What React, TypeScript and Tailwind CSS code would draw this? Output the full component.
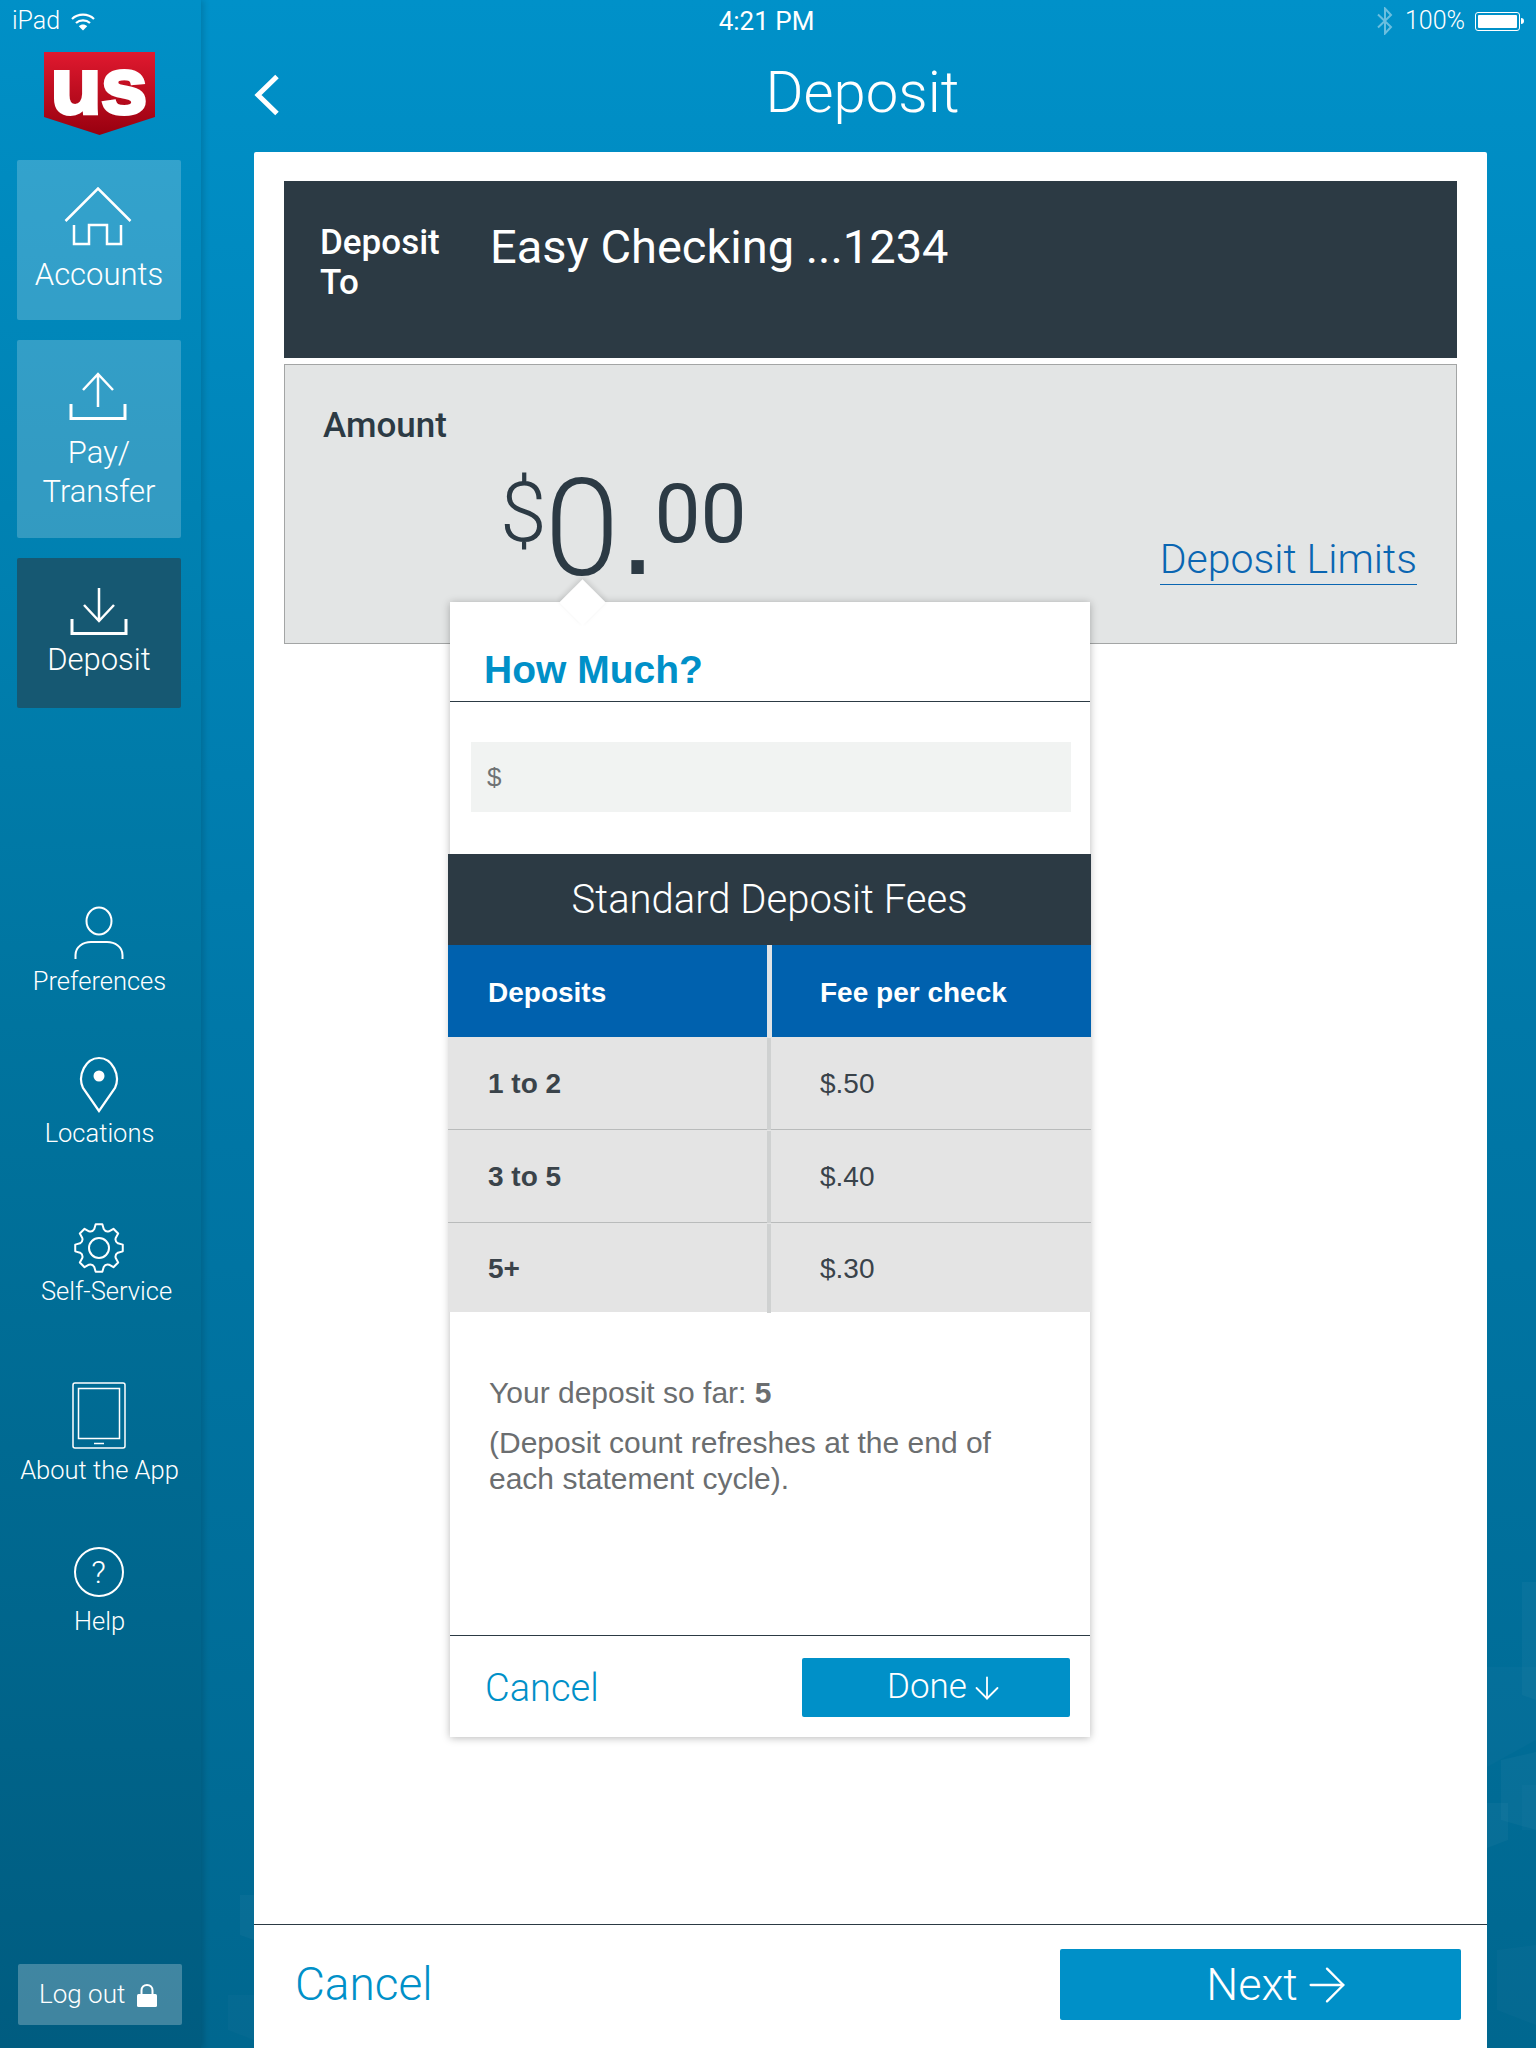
import { ArrowDown, ArrowRight } from 'lucide-react'
import type { ReactNode } from 'react'

// builds the outline of the sidebar gear, teeth are rounded by the line join
function gearPath(cx: number, cy: number) {
  const at = (deg: number, r: number) => {
    const a = ((deg - 90) * Math.PI) / 180
    return `${(cx + r * Math.cos(a)).toFixed(2)} ${(cy + r * Math.sin(a)).toFixed(2)}`
  }
  let d = ''
  for (let i = 0; i < 8; i++) {
    const a = i * 45
    d += `${i === 0 ? 'M' : 'L'}${at(a - 14, 19.5)} L${at(a - 8, 24)} L${at(a + 8, 24)} L${at(a + 14, 19.5)} Q${at(a + 22.5, 17)} ${at(a + 31, 19.5)} `
  }
  return d + 'Z'
}

const Logo = () => (
  <svg width="112" height="84" viewBox="0 0 112 84" className="block overflow-visible">
    <defs>
      <linearGradient id="shield" x1="0" y1="0" x2="0" y2="1">
        <stop offset="0" stopColor="#e0192f" />
        <stop offset="1" stopColor="#98000f" />
      </linearGradient>
    </defs>
    <path d="M0 0H111V65L55.5 83L0 65Z" fill="url(#shield)" />
    <text
      x="55"
      y="61"
      textAnchor="middle"
      fill="#fff"
      stroke="#fff"
      strokeWidth="4"
      fontFamily="'Liberation Sans', sans-serif"
      fontWeight="700"
      fontSize="78"
      textLength="96"
      lengthAdjust="spacingAndGlyphs"
    >
      us
    </text>
  </svg>
)

// faint polygons of the wallpaper, visible in the strips beside the card
const Wallpaper = () => (
  <svg width="1536" height="2048" viewBox="0 0 1536 2048" fill="#fff" className="absolute inset-0">
    <path d="M1522 1582H1536V1700L1522 1695Z" fillOpacity="0.03" />
    <path d="M1487 1667H1536V1740L1487 1767Z" fillOpacity="0.02" />
    <path d="M1501 1760L1536 1752V1830L1501 1820Z" fillOpacity="0.03" />
    <path d="M1487 1803H1508V1840L1487 1848Z" fillOpacity="0.03" />
    <path d="M1522 1785H1536V1830H1522Z" fillOpacity="0.02" />
    <path d="M1497 1950L1536 1945V2025L1497 2010Z" fillOpacity="0.02" />
    <path d="M240 1895H254V1940L240 1935Z" fillOpacity="0.03" />
    <path d="M228 1995H254V2040L228 2030Z" fillOpacity="0.02" />
  </svg>
)

const HouseIcon = () => (
  <svg width="68" height="60" viewBox="0 0 68 60" fill="none" stroke="#fff" strokeWidth="2.5" className="block">
    <path d="M1.5 34L34 1.5L66.5 34" />
    <path d="M10 38V57H25V38H43V57H57V38" />
  </svg>
)

const UploadIcon = () => (
  <svg width="58" height="48" viewBox="0 0 58 48" fill="none" stroke="#fff" strokeWidth="3" className="block">
    <path d="M29 2V35M14 18L29 2L44 18" strokeWidth="2.5" />
    <path d="M2 32V46.5H56V32" />
  </svg>
)

const DownloadIcon = () => (
  <svg width="58" height="47" viewBox="0 0 58 47" fill="none" stroke="#fff" strokeWidth="3" className="block">
    <path d="M29 0V33M14 17L29 33L44 17" strokeWidth="2.5" />
    <path d="M2 31V45.5H56V31" />
  </svg>
)

const PersonIcon = () => (
  <svg width="50" height="54" viewBox="0 0 50 54" fill="none" stroke="#fff" strokeWidth="2" className="block">
    <ellipse cx="25" cy="15" rx="12.5" ry="13.5" />
    <path d="M1.5 53V49C1.5 41 9 36 17 36H33C41 36 48.5 41 48.5 49V53" />
  </svg>
)

const PinIcon = () => (
  <svg width="42" height="57" viewBox="0 0 42 57" fill="none" stroke="#fff" strokeWidth="2.2" className="block">
    <path d="M21 55L5 32C-1 19 8 2 21 2C34 2 43 19 37 32Z" strokeLinejoin="miter" />
    <circle cx="21" cy="20" r="5.5" fill="#fff" stroke="none" />
  </svg>
)

const GearIcon = () => (
  <svg width="52" height="52" viewBox="0 0 52 52" fill="none" stroke="#fff" strokeWidth="2" strokeLinejoin="round" className="block">
    <path d={gearPath(26, 26)} />
    <circle cx="26" cy="26" r="10" />
  </svg>
)

const TabletIcon = () => (
  <svg width="54" height="67" viewBox="0 0 54 67" fill="none" stroke="#fff" strokeWidth="1.5" className="block">
    <rect x="1" y="1" width="52" height="65" rx="2" />
    <rect x="6.5" y="6.5" width="41" height="50" />
    <path d="M22 61.5H32" />
  </svg>
)

const HelpIcon = () => (
  <div className="w-[50px] h-[50px] rounded-full border-2 border-white flex items-center justify-center text-[32px] font-light leading-none">
    ?
  </div>
)

const LockIcon = () => (
  <svg width="20" height="24" viewBox="0 0 20 24" className="block">
    <path d="M4.5 12V7.5C4.5 4.3 6.8 2 10 2C13.2 2 15.5 4.3 15.5 7.5V12" fill="none" stroke="#fff" strokeWidth="2" />
    <rect x="0" y="11" width="20" height="13" rx="1.5" fill="#fff" />
  </svg>
)

const WifiIcon = () => (
  <svg width="24" height="19" viewBox="0 0 24 19" fill="none" stroke="#fff" strokeWidth="2.2" className="block">
    <path d="M1 7C7 1.2 17 1.2 23 7" />
    <path d="M5 11C8.8 7.4 15.2 7.4 19 11" />
    <path d="M12 18.5L7.8 14.2C10.2 12 13.8 12 16.2 14.2Z" fill="#fff" stroke="none" />
  </svg>
)

const BluetoothIcon = () => (
  <svg width="16" height="28" viewBox="0 0 16 28" fill="none" stroke="#fff" strokeOpacity="0.42" strokeWidth="2" className="block">
    <path d="M1 7.5L14 20L8 26.5V1.5L14 8L1 20.5" />
  </svg>
)

const Battery = () => (
  <div className="flex items-center">
    <div className="w-[45px] h-[19px] border border-white rounded-[3px] p-[2px]">
      <div className="w-full h-full bg-white rounded-[1px]" />
    </div>
    <div className="w-[3px] h-[6px] bg-white rounded-r-full ml-px" />
  </div>
)

function NavTile({ label, icon, height, labelClass, dark }: { label: ReactNode; icon: ReactNode; height: string; labelClass: string; dark?: boolean }) {
  return (
    <div
      className={`${height} ${dark ? 'bg-[#165872]' : 'bg-white/20'} mx-[17px] w-[164px] rounded-[2px] flex flex-col items-center justify-center text-[31px] leading-[39px] text-center text-white font-light`}
    >
      {icon}
      <div className={labelClass}>{label}</div>
    </div>
  )
}

function NavLink({ label, icon, height, className }: { label: string; icon: ReactNode; height: string; className?: string }) {
  return (
    <div className={`${height} pr-[2px] flex flex-col items-center text-[25.5px] leading-[32px] text-white font-light whitespace-nowrap`}>
      <div className="-ml-[2px]">{icon}</div>
      <div className={className}>{label}</div>
    </div>
  )
}

const feeRows = [
  ['1 to 2', '$.50', 'h-[93px] border-b border-[#b9bbbb]'],
  ['3 to 5', '$.40', 'h-[93px] border-b border-[#b9bbbb]'],
  ['5+', '$.30', 'h-[89px]'],
]

export default function App() {
  return (
    <div className="relative w-[1536px] h-[2048px] overflow-hidden flex bg-gradient-to-b from-[#0091c9] via-[#0078a8] to-[#00678f] text-white font-['Roboto',sans-serif]">
      <Wallpaper />

      {/* iOS status bar */}
      <div className="absolute inset-x-0 top-0 h-[42px] flex items-center justify-between pl-[12px] pr-[12px] text-[25px] font-light z-10">
        <div className="flex items-center gap-[11px] w-[300px]">
          <span>iPad</span>
          <WifiIcon />
        </div>
        <div className="text-[26px] font-normal -ml-[3px]">4:21 PM</div>
        <div className="flex items-center justify-end gap-[10px] w-[300px]">
          <BluetoothIcon />
          <span className="ml-[2px]">100%</span>
          <Battery />
        </div>
      </div>

      {/* sidebar */}
      <aside className="relative w-[201px] shrink-0 flex flex-col bg-gradient-to-b from-[#0090c7] via-[#00749f] to-[#005c80] shadow-[3px_0_6px_rgba(0,0,0,0.14)] pt-[52px]">
        <div className="pl-[44px] h-[108px]">
          <Logo />
        </div>
        <NavTile height="h-[160px]" label="Accounts" labelClass="mt-[8px]" icon={<div className="-ml-[2px]"><HouseIcon /></div>} />
        <div className="h-[20px]" />
        <NavTile height="h-[198px]" label={<>Pay/<br />Transfer</>} labelClass="mt-[13px]" icon={<div className="-ml-[2px] mt-[4px]"><UploadIcon /></div>} />
        <div className="h-[20px]" />
        <NavTile height="h-[150px]" dark label="Deposit" labelClass="mt-[5px]" icon={<DownloadIcon />} />
        <div className="h-[198px]" />
        <NavLink height="h-[150px]" label="Preferences" icon={<PersonIcon />} className="mt-[5px]" />
        <NavLink height="h-[166px]" label="Locations" icon={<PinIcon />} className="mt-[4px]" />
        <NavLink height="h-[160px]" label="Self-Service" icon={<GearIcon />} className="ml-[14px] mt-[1px]" />
        <NavLink height="h-[165px]" label="About the App" icon={<TabletIcon />} className="mt-[5px]" />
        <NavLink height="h-[100px]" label="Help" icon={<HelpIcon />} className="mt-[8px]" />
        <div className="mt-auto mb-[23px] mx-[18px] w-[164px] h-[61px] rounded-[2px] bg-white/25 flex items-center pl-[21px] gap-[12px] text-[26px] font-light">
          <span>Log out</span>
          <LockIcon />
        </div>
      </aside>

      <main className="relative flex-1 flex flex-col min-w-0">
        <header className="h-[152px] shrink-0 flex pl-[52px] pr-[90px]">
          <svg width="26" height="42" viewBox="0 0 26 42" fill="none" stroke="#fff" strokeWidth="5" className="mt-[74px] shrink-0">
            <path d="M24 2.5L5 21L24 39.5" />
          </svg>
          <h1 className="flex-1 text-center text-[58px] leading-[68px] font-light mt-[58px]">Deposit</h1>
        </header>

        <section className="relative flex-1 ml-[53px] mr-[49px] bg-white rounded-t-[2px] flex flex-col text-[#2c3a44]">
          <div className="mt-[29px] mx-[30px] h-[177px] bg-[#2c3a44] text-white flex pl-[36px] pt-[42px]">
            <div className="w-[170px] text-[35px] leading-[40px] font-medium">Deposit<br />To</div>
            <div className="text-[47px] leading-[54px] font-normal -mt-[3px]">Easy Checking ...1234</div>
          </div>

          <div className="mt-[6px] mx-[30px] h-[280px] bg-[#e3e5e5] border border-[#a3a5a5] pl-[38px] flex flex-col">
            <div className="text-[35px] leading-[40px] font-medium mt-[41px]">Amount</div>
            <div className="flex items-start justify-between pr-[39px]">
              <div className="flex items-start ml-[177px] mt-[25px] font-light">
                <span className="text-[84px] leading-[90px] -mt-[3px] font-light">$</span>
                <span className="text-[135px] leading-[130px] -mt-[7px] -ml-[2px]">0</span>
                <span className="text-[130px] leading-[130px] -mt-[7px] font-normal w-[35px] font-['Liberation_Sans',sans-serif]">.</span>
                <span className="text-[82px] leading-[90px] -mt-[2px] font-normal">00</span>
              </div>
              <div className="text-[41px] leading-[49px] font-light text-[#0a66b2] border-b border-[#0a66b2] mt-[89px]">
                Deposit Limits
              </div>
            </div>
          </div>

          {/* how much popover */}
          <div className="absolute left-[196px] top-[450px] w-[640px] h-[1135px] bg-white shadow-[0_1px_8px_rgba(0,0,0,0.28)] flex flex-col">
            <div className="absolute -top-[16px] left-[116px] w-[33px] h-[33px] rotate-45 bg-white shadow-[-2px_-2px_5px_rgba(0,0,0,0.12)]" />
            <div className="relative h-[100px] border-b border-[#2c3a44] pl-[34px] pt-[46px] text-[39px] leading-[44px] font-bold text-[#0090c8] font-['Liberation_Sans',sans-serif]">
              How Much?
            </div>
            <div className="mt-[40px] mx-[21px] h-[70px] w-[600px] bg-[#f1f3f2] flex items-center pl-[16px] text-[26px] text-[#6f7274] font-['Liberation_Sans',sans-serif]">
              $
            </div>
            <div className="mt-[42px] -ml-[2px] -mr-px h-[91px] bg-[#2c3a44] text-white flex items-center justify-center text-[40px] font-light">
              Standard Deposit Fees
            </div>
            <div className="-ml-[2px] -mr-px flex flex-col text-[28px] font-['Liberation_Sans',sans-serif]">
              <div className="h-[92px] flex bg-[#0061ae] text-white font-bold items-center">
                <div className="w-[319px] pl-[40px] h-full flex items-center pt-[3px]">Deposits</div>
                <div className="w-[5px] h-full bg-[#dfe3e6]" />
                <div className="pl-[48px] pt-[3px]">Fee per check</div>
              </div>
              {feeRows.map(([count, fee, row]) => (
                <div key={count} className={`${row} flex bg-[#e4e4e4] text-[#3a434a] pt-[2px]`}>
                  <div className="w-[319px] pl-[40px] flex items-center font-bold">{count}</div>
                  <div className="w-[4px] -my-px bg-[#cfd1d1]" />
                  <div className="pl-[49px] flex items-center">{fee}</div>
                </div>
              ))}
            </div>
            <div className="pl-[39px] pr-[60px] pt-[63px] text-[30px] leading-[36px] text-[#6b6e70] font-['Liberation_Sans',sans-serif]">
              <p>Your deposit so far: <b>5</b></p>
              <p className="mt-[14px]">(Deposit count refreshes at the end of each statement cycle).</p>
            </div>
            <div className="mt-auto border-t border-[#2c3a44] h-[102px] pt-[2px] flex items-center justify-between pl-[35px] pr-[20px]">
              <span className="text-[38px] font-light text-[#0090c8] mt-[2px]">Cancel</span>
              <div className="w-[268px] h-[59px] rounded-[2px] bg-[#0090c8] text-white flex items-center justify-center text-[35px] font-light gap-[2px] pl-[20px]">
                Done <ArrowDown size={36} strokeWidth={1.2} />
              </div>
            </div>
          </div>

          <footer className="mt-auto h-[124px] pb-[4px] border-t border-[#2c3a44] flex items-center justify-between pl-[41px] pr-[26px]">
            <span className="text-[46px] font-light text-[#0090c8]">Cancel</span>
            <div className="w-[401px] h-[71px] rounded-[2px] bg-[#0090c8] text-white flex items-center justify-center text-[45px] font-light gap-px pl-[40px]">
              Next <ArrowRight size={56} strokeWidth={1} />
            </div>
          </footer>
        </section>
      </main>
    </div>
  )
}
